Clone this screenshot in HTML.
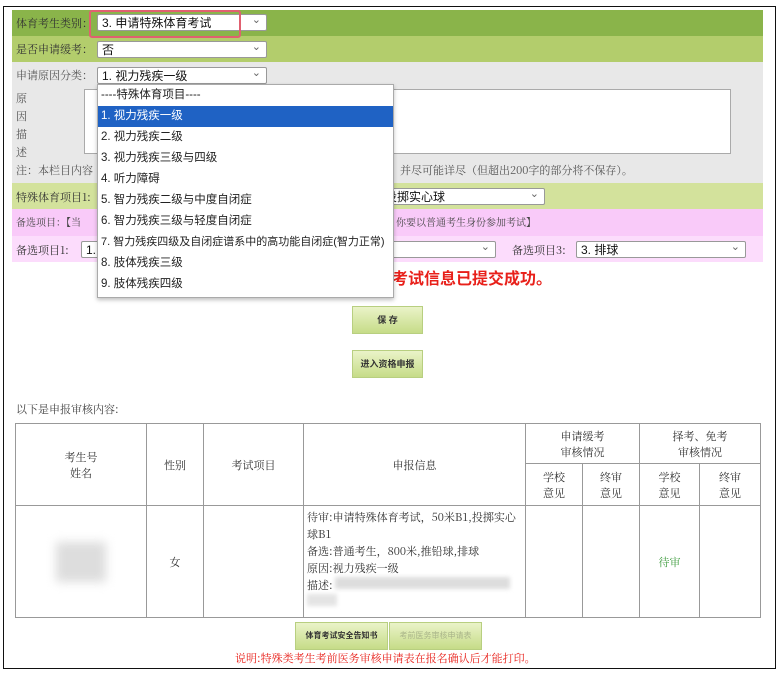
<!DOCTYPE html>
<html><head><meta charset="utf-8"><style>
body{margin:0;background:#fff;font-family:"Liberation Sans","Noto Sans CJK SC",sans-serif;font-size:12px;color:#333;}
.frame{position:absolute;left:3px;top:6px;width:771px;height:661px;border:1.5px solid #111;}
.abs{position:absolute;}
.row{position:absolute;left:12px;width:751px;}
.lbl{position:absolute;font-family:"Noto Serif CJK SC",serif;font-size:11px;color:#333;}
.sel{position:absolute;height:17px;border:1px solid #999;background:#fff;border-radius:2px;font-size:12px;line-height:17px;padding-left:4px;box-sizing:border-box;color:#111;}
.sel:after{content:"⌄";position:absolute;right:5px;top:-3px;font-size:11px;color:#666;}
.btn{position:absolute;background:linear-gradient(#eaf3c8,#c6dc88);border:1px solid #b8cf80;font-size:9px;text-align:center;color:#333;font-weight:bold;}
table{border-collapse:collapse;table-layout:fixed;position:absolute;left:15px;top:423px;width:745px;font-family:"Noto Serif CJK SC",serif;font-size:11px;}
td{border:1px solid #999;text-align:center;color:#333;}
.dd{position:absolute;left:97px;top:84px;width:295px;height:212px;background:#fff;border:1px solid #aaa;box-shadow:0 2px 4px rgba(0,0,0,.25);}
.dd div{height:21px;line-height:21px;padding-left:3px;font-size:11.5px;color:#222;}
.dd .hl{background:#1f62c4;color:#fff;}
</style></head><body>
<div class="frame"></div>
<div class="row" style="top:10px;height:26px;background:#8ab44a"></div>
<div class="row" style="top:36px;height:26px;background:#b3cd6c"></div>
<div class="row" style="top:62px;height:121px;background:#e8e8e8"></div>
<div class="row" style="top:183px;height:26px;background:#d3e29c"></div>
<div class="row" style="top:209px;height:27px;background:#f9caf9"></div>
<div class="row" style="top:236px;height:26px;background:#fcdcfc"></div>

<div class="lbl" style="left:16px;top:15px">体育考生类别：</div>
<div class="sel" style="left:97px;top:14px;width:170px">3. 申请特殊体育考试</div>
<div class="abs" style="left:89px;top:10px;width:148px;height:24px;border:2px solid #e06070;border-radius:3px;"></div>
<div class="lbl" style="left:16px;top:41px">是否申请缓考：</div>
<div class="sel" style="left:97px;top:41px;width:170px">否</div>
<div class="lbl" style="left:16px;top:67px;color:#555">申请原因分类：</div>
<div class="sel" style="left:97px;top:67px;width:170px">1. 视力残疾一级</div>
<div class="lbl" style="left:16px;top:89px;line-height:18px;color:#555">原<br>因<br>描<br>述</div>
<div class="abs" style="left:84px;top:89px;width:645px;height:63px;background:#fff;border:1px solid #aaa;"></div>
<div class="lbl" style="left:16px;top:162px;color:#555">注：本栏目内容</div>
<div class="lbl" style="left:400px;top:162px;color:#555">并尽可能详尽（但超出200字的部分将不保存）。</div>
<div class="lbl" style="left:16px;top:189px">特殊体育项目1:</div>
<div class="sel" style="left:380px;top:188px;width:165px">投掷实心球</div>
<div class="lbl" style="left:16px;top:214px;font-size:10px;color:#444">备选项目：【当</div>
<div class="lbl" style="left:396px;top:214px;font-size:10px;color:#444">你要以普通考生身份参加考试】</div>
<div class="lbl" style="left:16px;top:242px">备选项目1:</div>
<div class="sel" style="left:81px;top:241px;width:415px">1.</div>
<div class="lbl" style="left:512px;top:242px">备选项目3:</div>
<div class="sel" style="left:576px;top:241px;width:170px">3. 排球</div>
<div class="abs" style="left:296px;top:265px;font-size:16px;font-weight:bold;color:#e8201a">您的特殊体育考试信息已提交成功。</div>

<div class="btn" style="left:352px;top:306px;width:69px;height:26px;line-height:26px;">保 存</div>
<div class="btn" style="left:352px;top:350px;width:69px;height:26px;line-height:26px;">进入资格申报</div>
<div class="lbl" style="left:16px;top:401px;color:#444">以下是申报审核内容:</div>

<table>
<colgroup><col style="width:131px"><col style="width:57px"><col style="width:100px"><col style="width:222px"><col style="width:57px"><col style="width:57px"><col style="width:60px"><col style="width:61px"></colgroup>
<tr style="height:40px"><td rowspan="2">考生号<br>姓名</td><td rowspan="2">性别</td><td rowspan="2">考试项目</td><td rowspan="2">申报信息</td><td colspan="2">申请缓考<br>审核情况</td><td colspan="2">择考、免考<br>审核情况</td></tr>
<tr style="height:42px"><td>学校<br>意见</td><td>终审<br>意见</td><td>学校<br>意见</td><td>终审<br>意见</td></tr>
<tr style="height:112px"><td><div style="margin:auto;width:50px;height:40px;background:#ddd;filter:blur(5px)"></div></td><td>女</td><td></td><td style="text-align:left;padding:3px;line-height:17px;vertical-align:top">待审:申请特殊体育考试，50米B1,投掷实心球B1<br>备选:普通考生，800米,推铅球,排球<br>原因:视力残疾一级<br>描述: <span style="display:inline-block;width:175px;height:12px;background:#ddd;filter:blur(2px)"></span><br><span style="display:inline-block;width:30px;height:12px;background:#e4e4e4;filter:blur(2px)"></span></td><td></td><td></td><td style="color:#3a9a3a">待审</td><td></td></tr>
</table>
<div class="btn" style="left:295px;top:622px;width:91px;height:26px;line-height:26px;font-size:8px">体育考试安全告知书</div>
<div class="btn" style="left:389px;top:622px;width:91px;height:26px;line-height:26px;font-size:8px;color:#aab58a;font-weight:normal">考前医务审核申请表</div>
<div class="lbl" style="left:235px;top:650px;color:#e8201a">说明:特殊类考生考前医务审核申请表在报名确认后才能打印。</div>

<div class="dd">
<div>----特殊体育项目----</div>
<div class="hl">1. 视力残疾一级</div>
<div>2. 视力残疾二级</div>
<div>3. 视力残疾三级与四级</div>
<div>4. 听力障碍</div>
<div>5. 智力残疾二级与中度自闭症</div>
<div>6. 智力残疾三级与轻度自闭症</div>
<div style="font-size:11px;white-space:nowrap">7. 智力残疾四级及自闭症谱系中的高功能自闭症(智力正常)</div>
<div>8. 肢体残疾三级</div>
<div>9. 肢体残疾四级</div>
</div>
</body></html>
